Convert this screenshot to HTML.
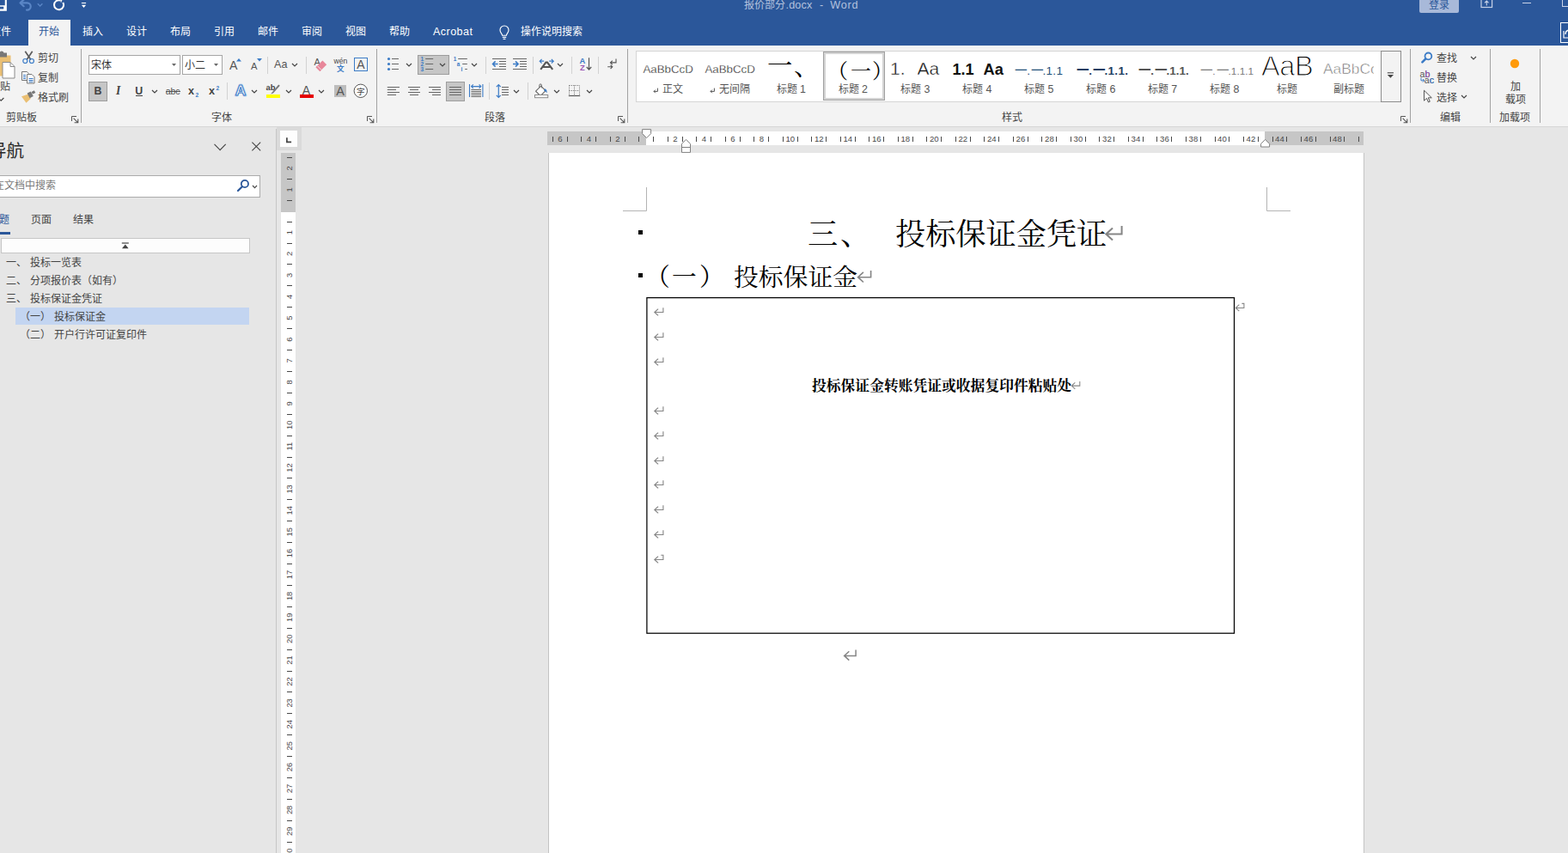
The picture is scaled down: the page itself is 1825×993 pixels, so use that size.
<!DOCTYPE html>
<html lang="zh-CN"><head><meta charset="utf-8"><title>报价部分.docx - Word</title>
<style>
html,body{margin:0;padding:0}
html{overflow:hidden;background:#e6e6e6}
body{width:1825px;height:993px;overflow:hidden;position:relative;background:#e6e6e6;font-family:"Liberation Sans",sans-serif;font-size:12px;color:#444}
.a{position:absolute;box-sizing:border-box;display:block;overflow:visible}
.l{white-space:pre}
svg{shape-rendering:auto}
.t{font-family:"Liberation Sans","Noto Sans CJK SC",sans-serif}
.s{font-family:"Liberation Serif","Noto Serif CJK SC",serif}
</style></head><body>
<div class="a" style="left:0px;top:0px;width:1825px;height:53px;background:#2b579a;"></div>
<div class="a" style="left:33px;top:23px;width:49px;height:31px;background:#f3f3f3;"></div>
<svg class="a" style="left:-6px;top:-4px;" width="15" height="18" viewBox="0 0 15 18"><path d="M0 3H12.8V15.6H0" fill="none" stroke="#fff" stroke-width="2.1"/><path d="M0 11H11.1V15" fill="none" stroke="#fff" stroke-width="1.7"/></svg>
<svg class="a" style="left:22px;top:-3px;" width="17" height="16" viewBox="0 0 17 16"><path d="M3 6.4h6.6a4.1 4.1 0 0 1 0 8.2H9" fill="none" stroke="#5a86c6" stroke-width="2.2" stroke-linecap="round"/><path d="M5.6 2.6L1.6 6.4l4 3.8" fill="none" stroke="#5a86c6" stroke-width="2.2" stroke-linecap="round" stroke-linejoin="round"/></svg>
<svg class="a" style="left:43px;top:3px;" width="8" height="6" viewBox="0 0 8 6"><path d="M0.8 1.2l2.8 2.8 2.8-2.8" fill="none" stroke="#5a86c6" stroke-width="1.3"/></svg>
<svg class="a" style="left:61px;top:-4px;" width="16" height="17" viewBox="0 0 16 17"><path d="M9.6 4.6A5.5 5.5 0 1 1 5.6 4.6" fill="none" stroke="#fff" stroke-width="2" transform="rotate(38 7.6 9.6)"/><path d="M8.2 0.4l5.6 3.2-2.6 0.6-1.2 3.4z" fill="#fff"/></svg>
<svg class="a" style="left:93px;top:2px;" width="10" height="8" viewBox="0 0 10 8"><path d="M1.9 1.5h5.2" stroke="#fff" stroke-width="1.1"/><path d="M1.9 3.7h5.2l-2.6 3.3z" fill="#fff"/></svg>
<svg class="a" style="left:866px;top:-2.4px" width="48.0" height="15.6"><text class="t" x="0" y="12" font-size="12" fill="#b4c2de">报价部分</text></svg>
<span class="a l" style="left:914.5px;top:-1px;font-size:12.6px;line-height:14px;color:#b4c2de;letter-spacing:0.15px;">.docx</span>
<span class="a l" style="left:954px;top:-1px;font-size:12.6px;line-height:14px;color:#b4c2de;">-</span>
<span class="a l" style="left:966.3px;top:-1px;font-size:12.6px;line-height:14px;color:#b4c2de;letter-spacing:0.75px;">Word</span>
<div class="a" style="left:1652px;top:0px;width:46px;height:15px;background:#a8b9d9;border-radius:0 0 2px 2px;"></div>
<svg class="a" style="left:1663px;top:-2.2px" width="24.0" height="15.6"><text class="t" x="0" y="12" font-size="12" fill="#2b579a">登录</text></svg>
<svg class="a" style="left:1723px;top:-5px;" width="15" height="15" viewBox="0 0 15 15"><rect x="1" y="0.5" width="12.6" height="13" fill="none" stroke="#c5d0e6" stroke-width="1.2"/><path d="M1 4.2h12.6M7.3 11.5v-5M5 8.3l2.3-2.3 2.3 2.3" fill="none" stroke="#c5d0e6" stroke-width="1.1"/></svg>
<div class="a" style="left:1772px;top:3px;width:10px;height:1px;background:#c9d3e8;"></div>
<div class="a" style="left:1818px;top:-3px;width:12px;height:11px;border:1px solid #c9d3e8;"></div>
<div class="a" style="left:1816px;top:26px;width:14px;height:24px;border:1px solid #fff;"></div>
<svg class="a" style="left:1819px;top:33px;" width="8" height="12" viewBox="0 0 8 12"><path d="M1 3v8h8M3 7c0-3 2-5 5-5" fill="none" stroke="#fff" stroke-width="1.2"/></svg>
<svg class="a" style="left:-10.8px;top:29.3px" width="24.0" height="15.6"><text class="t" x="0" y="12" font-size="12" fill="#fff">文件</text></svg>
<svg class="a" style="left:44.5px;top:29.3px" width="24.0" height="15.6"><text class="t" x="0" y="12" font-size="12" fill="#2b579a">开始</text></svg>
<svg class="a" style="left:95.8px;top:29.3px" width="24.0" height="15.6"><text class="t" x="0" y="12" font-size="12" fill="#fff">插入</text></svg>
<svg class="a" style="left:146.8px;top:29.3px" width="24.0" height="15.6"><text class="t" x="0" y="12" font-size="12" fill="#fff">设计</text></svg>
<svg class="a" style="left:197.8px;top:29.3px" width="24.0" height="15.6"><text class="t" x="0" y="12" font-size="12" fill="#fff">布局</text></svg>
<svg class="a" style="left:248.8px;top:29.3px" width="24.0" height="15.6"><text class="t" x="0" y="12" font-size="12" fill="#fff">引用</text></svg>
<svg class="a" style="left:299.8px;top:29.3px" width="24.0" height="15.6"><text class="t" x="0" y="12" font-size="12" fill="#fff">邮件</text></svg>
<svg class="a" style="left:350.8px;top:29.3px" width="24.0" height="15.6"><text class="t" x="0" y="12" font-size="12" fill="#fff">审阅</text></svg>
<svg class="a" style="left:401.8px;top:29.3px" width="24.0" height="15.6"><text class="t" x="0" y="12" font-size="12" fill="#fff">视图</text></svg>
<svg class="a" style="left:452.8px;top:29.3px" width="24.0" height="15.6"><text class="t" x="0" y="12" font-size="12" fill="#fff">帮助</text></svg>
<span class="a l" style="left:504px;top:30px;font-size:12.6px;line-height:14px;color:#fff;letter-spacing:0.42px;">Acrobat</span>
<svg class="a" style="left:579px;top:29px;" width="16" height="18" viewBox="0 0 16 18"><path d="M5.6 12.2c0-2-2.6-3-2.6-6.2a5 5 0 0 1 10 0c0 3.2-2.6 4.2-2.6 6.2z" fill="none" stroke="#fff" stroke-width="1.15"/><path d="M5.8 14.3h4.4M6.6 16.3h2.8" stroke="#fff" stroke-width="1.15"/></svg>
<svg class="a" style="left:606px;top:29.3px" width="72.0" height="15.6"><text class="t" x="0" y="12" font-size="12" fill="#fff">操作说明搜索</text></svg>
<div class="a" style="left:0px;top:53px;width:1825px;height:94px;background:#f3f3f3;"></div>
<div class="a" style="left:0px;top:147px;width:1825px;height:1px;background:#d6d6d6;"></div>
<svg class="a" style="left:-12px;top:58px;" width="30" height="34" viewBox="0 0 30 34"><path d="M2 6.5h22.5v24H2z" fill="#eabf73"/><path d="M7 3.5h4.5a2.6 2.6 0 0 1 5 0H20v5H7z" fill="#777"/><path d="M15 14.5h9l5 5V33H15z" fill="#fff" stroke="#8a8a8a" stroke-width="1"/><path d="M24 14.5v5h5" fill="none" stroke="#8a8a8a" stroke-width="1"/></svg>
<svg class="a" style="left:-11.7px;top:92.8px" width="24.0" height="15.6"><text class="t" x="0" y="12" font-size="12" fill="#444">粘贴</text></svg>
<svg class="a" style="left:-3.5px;top:113px;" width="8.4" height="5.4" viewBox="0 0 8.4 5.4"><path d="M1 1l3.2 3.2 3.2 -3.2" fill="none" stroke="#444" stroke-width="1.2"/></svg>
<svg class="a" style="left:25px;top:59px;" width="17" height="16" viewBox="0 0 17 16"><path d="M4.3 0.8l6.6 9.6M12.7 0.8L6.1 10.4" stroke="#5c5c5c" stroke-width="1.7" fill="none"/><circle cx="4.3" cy="12" r="2.5" fill="none" stroke="#3b7bc6" stroke-width="1.2"/><circle cx="11.9" cy="12" r="2.5" fill="none" stroke="#3b7bc6" stroke-width="1.2"/></svg>
<svg class="a" style="left:44.2px;top:60.3px" width="24.0" height="15.6"><text class="t" x="0" y="12" font-size="12" fill="#444">剪切</text></svg>
<svg class="a" style="left:24px;top:82px;" width="18" height="16" viewBox="0 0 18 16"><path d="M1.5 1.5h5.8l2.2 2.2v7.8h-8z" fill="#fff" stroke="#777" stroke-width="1"/><path d="M7.5 4.5h5.5l3 3v7.5h-8.5z" fill="#fff" stroke="#777" stroke-width="1"/><path d="M3 5.5h3M3 7.5h3M3 9.5h3M9.5 9.5h5M9.5 11.5h5M9.5 13.2h5" stroke="#3b7bc6" stroke-width="1"/></svg>
<svg class="a" style="left:44.2px;top:83.2px" width="24.0" height="15.6"><text class="t" x="0" y="12" font-size="12" fill="#444">复制</text></svg>
<svg class="a" style="left:24px;top:105px;" width="18" height="16" viewBox="0 0 18 16"><path d="M1 7.2l8.2-2.6 2.6 5.2-5.3 5z" fill="#eabf73"/><path d="M7.6 3.6l4.2-2.2 3 5.6-4.2 2.2z" fill="#777"/><path d="M12.6 1.9l3.2-1.7 1.5 2.7-3.3 1.7z" fill="#777"/></svg>
<svg class="a" style="left:44px;top:106.2px" width="36.0" height="15.6"><text class="t" x="0" y="12" font-size="12" fill="#444">格式刷</text></svg>
<svg class="a" style="left:7.2px;top:128.7px" width="36.0" height="15.6"><text class="t" x="0" y="12" font-size="12" fill="#444">剪贴板</text></svg>
<svg class="a" style="left:82.5px;top:134.5px;" width="9" height="9" viewBox="0 0 9 9"><path d="M0.5 6V0.5H6" fill="none" stroke="#555" stroke-width="1"/><path d="M2.6 2.6L7.6 7.6M7.8 3.6V7.8H3.6" fill="none" stroke="#555" stroke-width="1.1"/></svg>
<div class="a" style="left:94px;top:57px;width:1px;height:86px;background:#a2a2a2;"></div>
<div class="a" style="left:103px;top:64px;width:107px;height:23px;background:#fff;border:1px solid #a6a6a6;"></div>
<div class="a" style="left:212px;top:64px;width:47px;height:23px;background:#fff;border:1px solid #a6a6a6;"></div>
<svg class="a" style="left:105.8px;top:68px" width="24.0" height="15.6"><text class="t" x="0" y="12" font-size="12" fill="#333">宋体</text></svg>
<svg class="a" style="left:200px;top:74px;" width="5" height="3" viewBox="0 0 5 3"><path d="M0 0h5l-2.5 3z" fill="#666"/></svg>
<svg class="a" style="left:214.8px;top:68px" width="24.0" height="15.6"><text class="t" x="0" y="12" font-size="12" fill="#333">小二</text></svg>
<svg class="a" style="left:249px;top:74px;" width="5" height="3" viewBox="0 0 5 3"><path d="M0 0h5l-2.5 3z" fill="#666"/></svg>
<span class="a l" style="left:267px;top:68px;font-size:14.2px;line-height:16px;color:#555;">A</span>
<svg class="a" style="left:274.5px;top:67.5px;" width="6" height="4" viewBox="0 0 6 4"><path d="M0 3.5L3 0l3 3.5z" fill="#3b7bc6"/></svg>
<span class="a l" style="left:292px;top:71px;font-size:11.2px;line-height:12px;color:#555;">A</span>
<svg class="a" style="left:298.5px;top:67.5px;" width="6" height="4" viewBox="0 0 6 4"><path d="M0 0h6L3 3.5z" fill="#3b7bc6"/></svg>
<div class="a" style="left:311px;top:65.5px;width:1px;height:20px;background:#d2d2d2;"></div>
<span class="a l" style="left:319px;top:68px;font-size:12.6px;line-height:14px;color:#555;">Aa</span>
<svg class="a" style="left:338.7px;top:72.8px;" width="8" height="5.1" viewBox="0 0 8 5.1"><path d="M1 1l3 2.9 3 -2.9" fill="none" stroke="#444" stroke-width="1.2"/></svg>
<div class="a" style="left:356px;top:65.5px;width:1px;height:20px;background:#d2d2d2;"></div>
<span class="a l" style="left:365.5px;top:66px;font-size:11px;line-height:12px;color:#555;">A</span>
<svg class="a" style="left:366px;top:69px;" width="16" height="15" viewBox="0 0 16 15"><path d="M1.6 9.3L9.4 1.5l4.8 4.8-7.8 7.8z" fill="#e8879a"/><path d="M1.6 9.3l1.7-1.7 4.8 4.8-1.7 1.7z" fill="#e8879a" stroke="#f3f3f3" stroke-width="0.0"/><path d="M3.3 7.6l4.8 4.8" stroke="#f3f3f3" stroke-width="0.9"/></svg>
<span class="a l" style="left:388.4px;top:66px;font-size:8.6px;line-height:10px;color:#444;letter-spacing:0.1px;">wén</span>
<svg class="a" style="left:392.3px;top:73.7px" width="8.6" height="11.2"><text class="t" x="0" y="8.6" font-size="8.6" font-weight="bold" fill="#3b7bc6">文</text></svg>
<div class="a" style="left:412px;top:67px;width:16px;height:16px;border:1px solid #3b7bc6;"></div>
<span class="a l" style="left:415.2px;top:67px;font-size:14px;line-height:16px;color:#555;">A</span>
<div class="a" style="left:103px;top:95px;width:22px;height:23px;background:#c6c6c6;border:1px solid #9d9d9d;"></div>
<span class="a l" style="left:109.4px;top:99px;font-size:12.4px;line-height:14px;color:#444;font-weight:bold;">B</span>
<span class="a l" style="left:135px;top:98px;font-size:13.6px;line-height:15px;color:#444;font-family:'Liberation Serif',serif;font-weight:bold;font-style:italic;">I</span>
<span class="a l" style="left:157.2px;top:99px;font-size:12.4px;line-height:14px;color:#444;font-weight:bold;">U</span>
<div class="a" style="left:157.5px;top:111px;width:8.5px;height:1px;background:#444;"></div>
<svg class="a" style="left:175.7px;top:103.8px;" width="8" height="5.1" viewBox="0 0 8 5.1"><path d="M1 1l3 2.9 3 -2.9" fill="none" stroke="#444" stroke-width="1.2"/></svg>
<span class="a l" style="left:192.8px;top:100px;font-size:10.6px;line-height:12px;color:#555;letter-spacing:-0.2px;">abc</span>
<div class="a" style="left:192.5px;top:106px;width:17px;height:1px;background:#555;"></div>
<span class="a l" style="left:219px;top:99px;font-size:12.6px;line-height:14px;color:#444;font-weight:bold;">x</span>
<span class="a l" style="left:227.6px;top:107px;font-size:6.6px;line-height:7px;color:#3b7bc6;font-weight:bold;">2</span>
<span class="a l" style="left:243px;top:99px;font-size:12.6px;line-height:14px;color:#444;font-weight:bold;">x</span>
<span class="a l" style="left:251.6px;top:99px;font-size:6.6px;line-height:7px;color:#3b7bc6;font-weight:bold;">2</span>
<div class="a" style="left:264px;top:96px;width:1px;height:20px;background:#d2d2d2;"></div>
<svg class="a" style="left:270px;top:96px;" width="20" height="19" viewBox="0 0 20 19"><text x="10" y="15.2" text-anchor="middle" font-family="Liberation Sans,sans-serif" font-size="17.4" fill="#fff" stroke="#c3d6f0" stroke-width="3" stroke-linejoin="round">A</text><text x="10" y="15.2" text-anchor="middle" font-family="Liberation Sans,sans-serif" font-size="17.4" font-weight="bold" fill="#fff" stroke="#3b7bc6" stroke-width="1.05" stroke-linejoin="round">A</text></svg>
<svg class="a" style="left:291.5px;top:103.8px;" width="8" height="5.1" viewBox="0 0 8 5.1"><path d="M1 1l3 2.9 3 -2.9" fill="none" stroke="#444" stroke-width="1.2"/></svg>
<span class="a l" style="left:309.6px;top:96px;font-size:9.4px;line-height:11px;color:#444;font-weight:bold;">ab</span>
<svg class="a" style="left:313px;top:98px;" width="14" height="12" viewBox="0 0 14 12"><path d="M11.2 0.6l1.6 1.2L5 10.4l-3 1z" fill="#777"/></svg>
<div class="a" style="left:310px;top:110px;width:16px;height:4px;background:#ffff00;"></div>
<svg class="a" style="left:331.5px;top:103.8px;" width="8" height="5.1" viewBox="0 0 8 5.1"><path d="M1 1l3 2.9 3 -2.9" fill="none" stroke="#444" stroke-width="1.2"/></svg>
<span class="a l" style="left:351.8px;top:97px;font-size:14px;line-height:16px;color:#555;">A</span>
<div class="a" style="left:349px;top:110px;width:16px;height:4px;background:#e60000;"></div>
<svg class="a" style="left:370.4px;top:103.8px;" width="8" height="5.1" viewBox="0 0 8 5.1"><path d="M1 1l3 2.9 3 -2.9" fill="none" stroke="#444" stroke-width="1.2"/></svg>
<div class="a" style="left:389px;top:99px;width:14px;height:14px;background:#bdbdbd;"></div>
<span class="a l" style="left:391.2px;top:98px;font-size:14.4px;line-height:16px;color:#555;">A</span>
<svg class="a" style="left:411px;top:97px;" width="18" height="18" viewBox="0 0 18 18"><circle cx="8.8" cy="8.8" r="7.7" fill="#fff" stroke="#555" stroke-width="1"/></svg>
<svg class="a" style="left:415px;top:99.6px" width="9.6" height="12.5"><text class="t" x="0" y="9.6" font-size="9.6" fill="#444">字</text></svg>
<svg class="a" style="left:246px;top:128.7px" width="24.0" height="15.6"><text class="t" x="0" y="12" font-size="12" fill="#444">字体</text></svg>
<svg class="a" style="left:426.5px;top:134.5px;" width="9" height="9" viewBox="0 0 9 9"><path d="M0.5 6V0.5H6" fill="none" stroke="#555" stroke-width="1"/><path d="M2.6 2.6L7.6 7.6M7.8 3.6V7.8H3.6" fill="none" stroke="#555" stroke-width="1.1"/></svg>
<div class="a" style="left:438px;top:57px;width:1px;height:86px;background:#a2a2a2;"></div>
<svg class="a" style="left:450px;top:66px;" width="16" height="17" viewBox="0 0 16 17"><circle cx="2.5" cy="2.5" r="1.6" fill="#3b7bc6"/><path d="M6 2.5H14" stroke="#666" stroke-width="1"/><circle cx="2.5" cy="8.5" r="1.6" fill="#3b7bc6"/><path d="M6 8.5H14" stroke="#666" stroke-width="1"/><circle cx="2.5" cy="14.5" r="1.6" fill="#3b7bc6"/><path d="M6 14.5H14" stroke="#666" stroke-width="1"/></svg>
<svg class="a" style="left:471.5px;top:72.8px;" width="8" height="5.1" viewBox="0 0 8 5.1"><path d="M1 1l3 2.9 3 -2.9" fill="none" stroke="#444" stroke-width="1.2"/></svg>
<div class="a" style="left:486px;top:64px;width:37px;height:23px;background:#c6c6c6;border:1px solid #9d9d9d;"></div>
<span class="a l" style="left:489.6px;top:65px;font-size:6.6px;line-height:7px;color:#3b7bc6;font-weight:bold;">1</span>
<span class="a l" style="left:489.6px;top:71px;font-size:6.6px;line-height:7px;color:#3b7bc6;font-weight:bold;">2</span>
<span class="a l" style="left:489.6px;top:77px;font-size:6.6px;line-height:7px;color:#3b7bc6;font-weight:bold;">3</span>
<svg class="a" style="left:494px;top:66px;" width="12" height="17" viewBox="0 0 12 17"><path d="M1.2 2.5H10.2" stroke="#666" stroke-width="1"/><path d="M1.2 8.5H10.2" stroke="#666" stroke-width="1"/><path d="M1.2 14.5H10.2" stroke="#666" stroke-width="1"/></svg>
<svg class="a" style="left:510.5px;top:72.8px;" width="8" height="5.1" viewBox="0 0 8 5.1"><path d="M1 1l3 2.9 3 -2.9" fill="none" stroke="#444" stroke-width="1.2"/></svg>
<span class="a l" style="left:527.8px;top:65px;font-size:6.4px;line-height:7px;color:#3b7bc6;font-weight:bold;">1</span>
<span class="a l" style="left:531.8px;top:71px;font-size:6.4px;line-height:7px;color:#3b7bc6;font-weight:bold;">a</span>
<span class="a l" style="left:536.6px;top:77px;font-size:6.4px;line-height:7px;color:#3b7bc6;font-weight:bold;">i</span>
<svg class="a" style="left:530px;top:66px;" width="16" height="17" viewBox="0 0 16 17"><path d="M3.2 2.5H13.8" stroke="#666" stroke-width="1"/><path d="M8.2 8.5H13.8" stroke="#666" stroke-width="1"/><path d="M11.2 14.5H13.8" stroke="#666" stroke-width="1"/></svg>
<svg class="a" style="left:547.5px;top:72.8px;" width="8" height="5.1" viewBox="0 0 8 5.1"><path d="M1 1l3 2.9 3 -2.9" fill="none" stroke="#444" stroke-width="1.2"/></svg>
<div class="a" style="left:565px;top:65.5px;width:1px;height:20px;background:#d2d2d2;"></div>
<svg class="a" style="left:572px;top:66px;" width="19" height="17" viewBox="0 0 19 17"><path d="M1 2.5H17" stroke="#666" stroke-width="1"/><path d="M1 14.5H17" stroke="#666" stroke-width="1"/><path d="M9 5.5H17" stroke="#666" stroke-width="1"/><path d="M9 8.5H17" stroke="#666" stroke-width="1"/><path d="M9 11.5H17" stroke="#666" stroke-width="1"/><path d="M1.4 8.5h6.2M4.6 5.4L1.5 8.5l3.1 3.1" fill="none" stroke="#3b7bc6" stroke-width="1.5"/></svg>
<svg class="a" style="left:596px;top:66px;" width="19" height="17" viewBox="0 0 19 17"><path d="M1 2.5H17" stroke="#666" stroke-width="1"/><path d="M1 14.5H17" stroke="#666" stroke-width="1"/><path d="M9 5.5H17" stroke="#666" stroke-width="1"/><path d="M9 8.5H17" stroke="#666" stroke-width="1"/><path d="M9 11.5H17" stroke="#666" stroke-width="1"/><path d="M1 8.5h6.2M4 5.4l3.1 3.1L4 11.6" fill="none" stroke="#3b7bc6" stroke-width="1.5"/></svg>
<div class="a" style="left:620px;top:65.5px;width:1px;height:20px;background:#d2d2d2;"></div>
<svg class="a" style="left:626px;top:66px;" width="20" height="17" viewBox="0 0 20 17"><path d="M3.2 14.8L9.4 6.6h1.6l6.2 8.2M5.8 12h8.8" fill="none" stroke="#555" stroke-width="2.1"/><path d="M2.2 5.2h5M4.6 2.8L2.2 5.2l2.4 2.4M18.2 5.2h-5M15.8 2.8l2.4 2.4-2.4 2.4" fill="none" stroke="#3b7bc6" stroke-width="1.2"/></svg>
<svg class="a" style="left:647.6px;top:72.8px;" width="8" height="5.1" viewBox="0 0 8 5.1"><path d="M1 1l3 2.9 3 -2.9" fill="none" stroke="#444" stroke-width="1.2"/></svg>
<div class="a" style="left:665px;top:65.5px;width:1px;height:20px;background:#d2d2d2;"></div>
<span class="a l" style="left:674.6px;top:65px;font-size:9.4px;line-height:11px;color:#3b7bc6;font-weight:bold;">A</span>
<span class="a l" style="left:675px;top:73px;font-size:9.4px;line-height:11px;color:#9b59b6;font-weight:bold;">Z</span>
<svg class="a" style="left:682px;top:66px;" width="8" height="17" viewBox="0 0 8 17"><path d="M3.5 1.2v14M0.8 12l2.7 3 2.7-3" fill="none" stroke="#555" stroke-width="1.2"/></svg>
<div class="a" style="left:696px;top:65.5px;width:1px;height:20px;background:#d2d2d2;"></div>
<svg class="a" style="left:706px;top:67px;" width="13" height="15" viewBox="0 0 13 15"><path d="M11 1.5v4.4H4.6M6.8 3.6L4.4 5.9l2.4 2.3" fill="none" stroke="#555" stroke-width="1.1"/><path d="M1.2 10.8h5.4M4.6 8.6l2.2 2.2-2.2 2.2" fill="none" stroke="#555" stroke-width="1.1"/></svg>
<svg class="a" style="left:450px;top:100px;" width="16" height="12" viewBox="0 0 16 12"><path d="M0.8 1.5H15" stroke="#666" stroke-width="1"/><path d="M0.8 4.5H11" stroke="#666" stroke-width="1"/><path d="M0.8 7.5H15" stroke="#666" stroke-width="1"/><path d="M0.8 10.5H11" stroke="#666" stroke-width="1"/></svg>
<svg class="a" style="left:474px;top:100px;" width="16" height="12" viewBox="0 0 16 12"><path d="M1 1.5H15" stroke="#666" stroke-width="1"/><path d="M3 4.5H13" stroke="#666" stroke-width="1"/><path d="M1 7.5H15" stroke="#666" stroke-width="1"/><path d="M3 10.5H13" stroke="#666" stroke-width="1"/></svg>
<svg class="a" style="left:498px;top:100px;" width="16" height="12" viewBox="0 0 16 12"><path d="M1 1.5H15" stroke="#666" stroke-width="1"/><path d="M5 4.5H15" stroke="#666" stroke-width="1"/><path d="M1 7.5H15" stroke="#666" stroke-width="1"/><path d="M5 10.5H15" stroke="#666" stroke-width="1"/></svg>
<div class="a" style="left:519px;top:95px;width:22px;height:23px;background:#c6c6c6;border:1px solid #9d9d9d;"></div>
<svg class="a" style="left:522px;top:100px;" width="16" height="12" viewBox="0 0 16 12"><path d="M1 1.5H15" stroke="#666" stroke-width="1"/><path d="M1 4.5H15" stroke="#666" stroke-width="1"/><path d="M1 7.5H15" stroke="#666" stroke-width="1"/><path d="M1 10.5H15" stroke="#666" stroke-width="1"/></svg>
<svg class="a" style="left:545px;top:97px;" width="18" height="17" viewBox="0 0 18 17"><path d="M1.5 1v15M16.9 1v15" stroke="#3b7bc6" stroke-width="1.1"/><path d="M3.6 3.6h11.2M5.8 1.4L3.6 3.6l2.2 2.2M12.6 1.4l2.2 2.2-2.2 2.2" fill="none" stroke="#3b7bc6" stroke-width="1.1"/><path d="M3.4 7.5H15" stroke="#666" stroke-width="1"/><path d="M3.4 9.5H15" stroke="#666" stroke-width="1"/><path d="M3.4 11.5H15" stroke="#666" stroke-width="1"/><path d="M3.4 13.5H15" stroke="#666" stroke-width="1"/><path d="M3.4 15.5H15" stroke="#666" stroke-width="1"/></svg>
<div class="a" style="left:569px;top:96px;width:1px;height:20px;background:#d2d2d2;"></div>
<svg class="a" style="left:576px;top:97px;" width="17" height="18" viewBox="0 0 17 18"><path d="M4.3 1.6v14.8M1.8 4.2l2.5-2.6 2.5 2.6M1.8 13.8l2.5 2.6 2.5-2.6" fill="none" stroke="#3b7bc6" stroke-width="1.2"/><path d="M8 4.5H16" stroke="#666" stroke-width="1"/><path d="M8 7.5H16" stroke="#666" stroke-width="1"/><path d="M8 10.5H16" stroke="#666" stroke-width="1"/><path d="M8 13.5H16" stroke="#666" stroke-width="1"/></svg>
<svg class="a" style="left:596.6px;top:103.8px;" width="8" height="5.1" viewBox="0 0 8 5.1"><path d="M1 1l3 2.9 3 -2.9" fill="none" stroke="#444" stroke-width="1.2"/></svg>
<div class="a" style="left:614px;top:96px;width:1px;height:20px;background:#d2d2d2;"></div>
<svg class="a" style="left:621px;top:97px;" width="18" height="18" viewBox="0 0 18 18"><path d="M2.6 9.2l6-6 5.4 5.4-6 6z" fill="#fff" stroke="#666" stroke-width="1.1"/><path d="M6.8 4.8V2.2a1.3 1.3 0 0 1 2.6 0v3.2" fill="none" stroke="#666" stroke-width="1"/><path d="M13.2 6.2c1.8 0.6 2.8 2.4 2.2 5.2-1-1.8-1.8-2.4-3.4-2.6z" fill="#3b7bc6"/><rect x="1.5" y="13.5" width="15.2" height="3.2" fill="#fff" stroke="#8a8a8a" stroke-width="1"/></svg>
<svg class="a" style="left:643.6px;top:103.8px;" width="8" height="5.1" viewBox="0 0 8 5.1"><path d="M1 1l3 2.9 3 -2.9" fill="none" stroke="#444" stroke-width="1.2"/></svg>
<svg class="a" style="left:661px;top:98px;" width="15" height="15" viewBox="0 0 15 15"><path d="M1.5 1.5h12M1.5 7.5h12M1.5 1.5v12M7.5 1.5v12M13.5 1.5v12" fill="none" stroke="#666" stroke-width="1" stroke-dasharray="1 1.4"/><path d="M0.8 13.5h13.4" stroke="#555" stroke-width="1.2"/></svg>
<svg class="a" style="left:682.3px;top:103.8px;" width="8" height="5.1" viewBox="0 0 8 5.1"><path d="M1 1l3 2.9 3 -2.9" fill="none" stroke="#444" stroke-width="1.2"/></svg>
<svg class="a" style="left:563.6px;top:128.7px" width="24.0" height="15.6"><text class="t" x="0" y="12" font-size="12" fill="#444">段落</text></svg>
<svg class="a" style="left:718.5px;top:134.5px;" width="9" height="9" viewBox="0 0 9 9"><path d="M0.5 6V0.5H6" fill="none" stroke="#555" stroke-width="1"/><path d="M2.6 2.6L7.6 7.6M7.8 3.6V7.8H3.6" fill="none" stroke="#555" stroke-width="1.1"/></svg>
<div class="a" style="left:730px;top:57px;width:1px;height:86px;background:#a2a2a2;"></div>
<div class="a" style="left:740px;top:59px;width:868px;height:60px;background:#fff;border:1px solid #d5d5d5;"></div>
<div class="a" style="left:748.4px;top:66px;width:59px;height:24px;overflow:hidden"><span class="a l" style="left:0;top:7px;font-size:13.3px;line-height:15px;color:#111;-webkit-text-stroke:0.3px #fff;">AaBbCcDd</span></div>
<svg class="a" style="left:760px;top:101.6px;" width="7" height="7" viewBox="0 0 7 7"><path d="M5.4 0.6V4.4H1M2.8 2.6L1 4.4l1.8 1.8" fill="none" stroke="#555" stroke-width="1"/></svg>
<svg class="a" style="left:770.8px;top:96.1px" width="24.0" height="15.6"><text class="t" x="0" y="12" font-size="12" fill="#555">正文</text></svg>
<div class="a" style="left:820.4px;top:66px;width:59px;height:24px;overflow:hidden"><span class="a l" style="left:0;top:7px;font-size:13.3px;line-height:15px;color:#111;-webkit-text-stroke:0.3px #fff;">AaBbCcDd</span></div>
<svg class="a" style="left:826.4px;top:101.6px;" width="7" height="7" viewBox="0 0 7 7"><path d="M5.4 0.6V4.4H1M2.8 2.6L1 4.4l1.8 1.8" fill="none" stroke="#555" stroke-width="1"/></svg>
<svg class="a" style="left:836.5px;top:96.1px" width="36.0" height="15.6"><text class="t" x="0" y="12" font-size="12" fill="#555">无间隔</text></svg>
<svg class="a" style="left:892.6px;top:58.3px" width="29.3" height="38.1"><text class="s" x="0" y="29.3" font-size="29.3" fill="#000">一</text></svg>
<svg class="a" style="left:924.2px;top:58.3px" width="29.3" height="38.1"><text class="s" x="0" y="29.3" font-size="29.3" fill="#000">、</text></svg>
<svg class="a" style="left:903.6px;top:96.1px" width="24.0" height="15.6"><text class="t" x="0" y="12" font-size="12" fill="#555">标题</text></svg>
<span class="a l" style="left:931px;top:97px;font-size:12.4px;line-height:14px;color:#555;">1</span>
<div class="a" style="left:958px;top:60px;width:72px;height:57px;background:#fff;border:1px solid #a0a0a0;box-shadow:inset 0 0 0 2px #d4d4d4;"></div>
<div class="a" style="left:961px;top:63px;width:63px;height:34px;overflow:hidden">
<svg class="a" style="left:2px;top:3.6px" width="24.0" height="31.2"><text class="s" x="0" y="24" font-size="24" fill="#000">（</text></svg>
<svg class="a" style="left:28.6px;top:3.6px" width="24.0" height="31.2"><text class="s" x="0" y="24" font-size="24" fill="#000">一</text></svg>
<svg class="a" style="left:54.4px;top:3.6px" width="24.0" height="31.2"><text class="s" x="0" y="24" font-size="24" fill="#000">）</text></svg>
</div>
<svg class="a" style="left:975.6px;top:96.1px" width="24.0" height="15.6"><text class="t" x="0" y="12" font-size="12" fill="#555">标题</text></svg>
<span class="a l" style="left:1003px;top:97px;font-size:12.4px;line-height:14px;color:#555;">2</span>
<div class="a" style="left:1036px;top:62px;width:20px;height:28px;overflow:hidden"><span class="a l" style="left:0;top:6px;font-size:21px;line-height:23px;color:#111;-webkit-text-stroke:0.4px #fff;">1.</span></div>
<div class="a" style="left:1067.6px;top:62px;width:26.6px;height:28px;overflow:hidden"><span class="a l" style="left:0;top:6px;font-size:21px;line-height:23px;color:#111;-webkit-text-stroke:0.4px #fff;">Aab</span></div>
<svg class="a" style="left:1048px;top:96.1px" width="24.0" height="15.6"><text class="t" x="0" y="12" font-size="12" fill="#555">标题</text></svg>
<span class="a l" style="left:1075.4px;top:97px;font-size:12.4px;line-height:14px;color:#555;">3</span>
<div class="a" style="left:1108.4px;top:62px;width:30px;height:28px;overflow:hidden"><span class="a l" style="left:0;top:9px;font-size:18.2px;line-height:20px;color:#111;font-weight:bold;">1.1</span></div>
<div class="a" style="left:1144.6px;top:62px;width:26px;height:28px;overflow:hidden"><span class="a l" style="left:0;top:9px;font-size:18.2px;line-height:20px;color:#111;font-weight:bold;">Aa</span></div>
<svg class="a" style="left:1120px;top:96.1px" width="24.0" height="15.6"><text class="t" x="0" y="12" font-size="12" fill="#555">标题</text></svg>
<span class="a l" style="left:1147.4px;top:97px;font-size:12.4px;line-height:14px;color:#555;">4</span>
<svg class="a" style="left:1181px;top:72px" width="14.6" height="19.0"><text class="t" x="0" y="14.6" font-size="14.6" fill="#1f4e79">一</text></svg>
<span class="a l" style="left:1195.2px;top:75px;font-size:13.4px;line-height:15px;color:#1f4e79;">.</span>
<svg class="a" style="left:1199.6px;top:72px" width="14.6" height="19.0"><text class="t" x="0" y="14.6" font-size="14.6" fill="#1f4e79">一</text></svg>
<span class="a l" style="left:1213.6px;top:75px;font-size:13.4px;line-height:15px;color:#1f4e79;letter-spacing:0.3px;">.1.1</span>
<svg class="a" style="left:1192px;top:96.1px" width="24.0" height="15.6"><text class="t" x="0" y="12" font-size="12" fill="#555">标题</text></svg>
<span class="a l" style="left:1219.4px;top:97px;font-size:12.4px;line-height:14px;color:#555;">5</span>
<svg class="a" style="left:1253px;top:72px" width="14.6" height="19.0"><text class="t" x="0" y="14.6" font-size="14.6" font-weight="bold" fill="#1f3e63">一</text></svg>
<span class="a l" style="left:1267.2px;top:75px;font-size:13.4px;line-height:15px;color:#1f3e63;font-weight:bold;">.</span>
<svg class="a" style="left:1271.6px;top:72px" width="14.6" height="19.0"><text class="t" x="0" y="14.6" font-size="14.6" font-weight="bold" fill="#1f3e63">一</text></svg>
<span class="a l" style="left:1285.6px;top:75px;font-size:13.4px;line-height:15px;color:#1f3e63;font-weight:bold;letter-spacing:0.3px;">.1.1.</span>
<svg class="a" style="left:1264.2px;top:96.1px" width="24.0" height="15.6"><text class="t" x="0" y="12" font-size="12" fill="#555">标题</text></svg>
<span class="a l" style="left:1291.6px;top:97px;font-size:12.4px;line-height:14px;color:#555;">6</span>
<svg class="a" style="left:1325px;top:72px" width="14.6" height="19.0"><text class="t" x="0" y="14.6" font-size="14.6" font-weight="bold" fill="#555">一</text></svg>
<span class="a l" style="left:1339.2px;top:75px;font-size:13.4px;line-height:15px;color:#555;font-weight:bold;">.</span>
<svg class="a" style="left:1343.6px;top:72px" width="14.6" height="19.0"><text class="t" x="0" y="14.6" font-size="14.6" font-weight="bold" fill="#555">一</text></svg>
<span class="a l" style="left:1357.6px;top:75px;font-size:13.4px;line-height:15px;color:#555;font-weight:bold;">.1.1.</span>
<svg class="a" style="left:1335.8px;top:96.1px" width="24.0" height="15.6"><text class="t" x="0" y="12" font-size="12" fill="#555">标题</text></svg>
<span class="a l" style="left:1363.2px;top:97px;font-size:12.4px;line-height:14px;color:#555;">7</span>
<svg class="a" style="left:1397px;top:72px" width="14.6" height="19.0"><text class="t" x="0" y="14.6" font-size="14.6" fill="#7a7a7a">一</text></svg>
<span class="a l" style="left:1411.2px;top:76px;font-size:11.8px;line-height:14px;color:#7a7a7a;">.</span>
<svg class="a" style="left:1415.6px;top:72px" width="14.6" height="19.0"><text class="t" x="0" y="14.6" font-size="14.6" fill="#7a7a7a">一</text></svg>
<span class="a l" style="left:1429.6px;top:76px;font-size:11.8px;line-height:14px;color:#7a7a7a;">.1.1.1</span>
<svg class="a" style="left:1408px;top:96.1px" width="24.0" height="15.6"><text class="t" x="0" y="12" font-size="12" fill="#555">标题</text></svg>
<span class="a l" style="left:1435.4px;top:97px;font-size:12.4px;line-height:14px;color:#555;">8</span>
<div class="a" style="left:1468px;top:66px;width:62px;height:26px;overflow:hidden"><span class="a l" style="left:0;top:-8px;font-size:32.6px;line-height:37px;color:#000;letter-spacing:-0.4px;-webkit-text-stroke:1.25px #fff;">AaB</span></div>
<svg class="a" style="left:1486px;top:96.1px" width="24.0" height="15.6"><text class="t" x="0" y="12" font-size="12" fill="#555">标题</text></svg>
<div class="a" style="left:1540px;top:66px;width:59.4px;height:26px;overflow:hidden"><span class="a l" style="left:0;top:4px;font-size:17.4px;line-height:20px;color:#6f6f6f;-webkit-text-stroke:0.55px #fff;">AaBbCcD</span></div>
<svg class="a" style="left:1552px;top:96.1px" width="36.0" height="15.6"><text class="t" x="0" y="12" font-size="12" fill="#555">副标题</text></svg>
<div class="a" style="left:1607px;top:59px;width:24px;height:60px;background:#f3f3f3;border:1px solid #8c8c8c;"></div>
<svg class="a" style="left:1614px;top:84px;" width="9" height="8" viewBox="0 0 9 8"><path d="M0.8 0.8h7.2" stroke="#444" stroke-width="1.1"/><path d="M0.8 3h7.2L4.4 6.8z" fill="#444"/></svg>
<svg class="a" style="left:1166px;top:128.7px" width="24.0" height="15.6"><text class="t" x="0" y="12" font-size="12" fill="#444">样式</text></svg>
<svg class="a" style="left:1629.5px;top:134.5px;" width="9" height="9" viewBox="0 0 9 9"><path d="M0.5 6V0.5H6" fill="none" stroke="#555" stroke-width="1"/><path d="M2.6 2.6L7.6 7.6M7.8 3.6V7.8H3.6" fill="none" stroke="#555" stroke-width="1.1"/></svg>
<div class="a" style="left:1641px;top:57px;width:1px;height:86px;background:#a2a2a2;"></div>
<svg class="a" style="left:1653px;top:60px;" width="15" height="15" viewBox="0 0 15 15"><circle cx="9.4" cy="5.4" r="3.9" fill="none" stroke="#3b7bc6" stroke-width="1.8"/><path d="M6.4 8.4L2.4 12.4" stroke="#3b7bc6" stroke-width="2.6" stroke-linecap="round"/></svg>
<svg class="a" style="left:1672px;top:60.3px" width="24.0" height="15.6"><text class="t" x="0" y="12" font-size="12" fill="#444">查找</text></svg>
<svg class="a" style="left:1710.5px;top:64.5px;" width="8" height="5.1" viewBox="0 0 8 5.1"><path d="M1 1l3 2.9 3 -2.9" fill="none" stroke="#444" stroke-width="1.2"/></svg>
<span class="a l" style="left:1652.6px;top:80px;font-size:10.6px;line-height:12px;color:#555;">ab</span>
<span class="a l" style="left:1658.5px;top:80px;font-size:10.6px;line-height:12px;color:#9b59b6;">b</span>
<span class="a l" style="left:1657.8px;top:87px;font-size:10.6px;line-height:12px;color:#555;">ac</span>
<span class="a l" style="left:1663.7px;top:87px;font-size:10.6px;line-height:12px;color:#3b7bc6;">c</span>
<svg class="a" style="left:1653px;top:90px;" width="6" height="7" viewBox="0 0 6 7"><path d="M1 0.5v3.3h3.6M3 2l1.8 1.8L3 5.6" fill="none" stroke="#3b7bc6" stroke-width="1"/></svg>
<svg class="a" style="left:1672px;top:83.2px" width="24.0" height="15.6"><text class="t" x="0" y="12" font-size="12" fill="#444">替换</text></svg>
<svg class="a" style="left:1656px;top:104px;" width="12" height="17" viewBox="0 0 12 17"><path d="M1.5 1.2v12l3-2.8 2 4.6 1.8-0.8-2-4.4h4z" fill="#fff" stroke="#555" stroke-width="1" stroke-linejoin="round"/></svg>
<svg class="a" style="left:1672px;top:106.2px" width="24.0" height="15.6"><text class="t" x="0" y="12" font-size="12" fill="#444">选择</text></svg>
<svg class="a" style="left:1699.5px;top:110.4px;" width="8" height="5.1" viewBox="0 0 8 5.1"><path d="M1 1l3 2.9 3 -2.9" fill="none" stroke="#444" stroke-width="1.2"/></svg>
<svg class="a" style="left:1676px;top:128.7px" width="24.0" height="15.6"><text class="t" x="0" y="12" font-size="12" fill="#444">编辑</text></svg>
<div class="a" style="left:1734px;top:57px;width:1px;height:86px;background:#a2a2a2;"></div>
<svg class="a" style="left:1756px;top:67px;" width="14" height="14" viewBox="0 0 14 14"><circle cx="7" cy="7" r="5.2" fill="#ff9a0a"/></svg>
<svg class="a" style="left:1758px;top:93.3px" width="12.0" height="15.6"><text class="t" x="0" y="12" font-size="12" fill="#444">加</text></svg>
<svg class="a" style="left:1752px;top:108.2px" width="24.0" height="15.6"><text class="t" x="0" y="12" font-size="12" fill="#444">载项</text></svg>
<svg class="a" style="left:1745px;top:128.7px" width="36.0" height="15.6"><text class="t" x="0" y="12" font-size="12" fill="#444">加载项</text></svg>
<div class="a" style="left:1792px;top:57px;width:1px;height:86px;background:#a2a2a2;"></div>
<div class="a" style="left:321px;top:150px;width:1px;height:843px;background:#c6c6c6;"></div>
<svg class="a" style="left:-13.4px;top:161.8px" width="41.2" height="26.8"><text class="t" x="0" y="20.6" font-size="20.6" fill="#2b2b2b">导航</text></svg>
<svg class="a" style="left:248px;top:166px;" width="16" height="11" viewBox="0 0 16 11"><path d="M1.5 1.8l6.6 6.8 6.6-6.8" fill="none" stroke="#444" stroke-width="1.1"/></svg>
<svg class="a" style="left:292px;top:164px;" width="13" height="13" viewBox="0 0 13 13"><path d="M1.4 1.6l9.8 9.8M11.2 1.6l-9.8 9.8" fill="none" stroke="#444" stroke-width="1.1"/></svg>
<div class="a" style="left:-5px;top:204px;width:308px;height:26px;background:#fff;border:1px solid #ababab;"></div>
<svg class="a" style="left:-7.4px;top:207.6px" width="72.0" height="15.6"><text class="t" x="0" y="12" font-size="12" fill="#7a7a7a">在文档中搜索</text></svg>
<svg class="a" style="left:275px;top:208px;" width="17" height="16" viewBox="0 0 17 16"><circle cx="9.9" cy="6" r="4.1" fill="none" stroke="#2b579a" stroke-width="1.8"/><path d="M6.9 9.2L2 14" stroke="#2b579a" stroke-width="2.2" stroke-linecap="round"/></svg>
<svg class="a" style="left:293.4px;top:214.8px;" width="7" height="4.8" viewBox="0 0 7 4.8"><path d="M1 1l2.5 2.6 2.5 -2.6" fill="none" stroke="#444" stroke-width="1.1"/></svg>
<svg class="a" style="left:-12.8px;top:248.2px" width="24.0" height="15.6"><text class="t" x="0" y="12" font-size="12" fill="#2b579a">标题</text></svg>
<div class="a" style="left:0px;top:270px;width:12px;height:3px;background:#2b579a;"></div>
<svg class="a" style="left:35.6px;top:248.2px" width="24.0" height="15.6"><text class="t" x="0" y="12" font-size="12" fill="#444">页面</text></svg>
<svg class="a" style="left:85px;top:248.2px" width="24.0" height="15.6"><text class="t" x="0" y="12" font-size="12" fill="#444">结果</text></svg>
<div class="a" style="left:1px;top:277px;width:290px;height:18px;background:#fdfdfd;border:1px solid #c6c6c6;"></div>
<svg class="a" style="left:141px;top:282px;" width="10" height="8" viewBox="0 0 10 8"><path d="M0.8 1h8" stroke="#444" stroke-width="1.2"/><path d="M4.8 2.6L8.6 7.2H1z" fill="#444"/></svg>
<svg class="a" style="left:7px;top:297.5px" width="24.0" height="15.6"><text class="t" x="0" y="12" font-size="12" fill="#444">一、</text></svg>
<svg class="a" style="left:35px;top:297.5px" width="60.0" height="15.6"><text class="t" x="0" y="12" font-size="12" fill="#444">投标一览表</text></svg>
<svg class="a" style="left:7px;top:318.5px" width="24.0" height="15.6"><text class="t" x="0" y="12" font-size="12" fill="#444">二、</text></svg>
<svg class="a" style="left:35px;top:318.5px" width="104.6" height="15.6"><text class="t" x="0" y="12" font-size="12" fill="#444">分项报价表（如有）</text></svg>
<svg class="a" style="left:7px;top:339.5px" width="24.0" height="15.6"><text class="t" x="0" y="12" font-size="12" fill="#444">三、</text></svg>
<svg class="a" style="left:35px;top:339.5px" width="84.0" height="15.6"><text class="t" x="0" y="12" font-size="12" fill="#444">投标保证金凭证</text></svg>
<div class="a" style="left:18px;top:358px;width:272px;height:20px;background:#c3d5f1;"></div>
<svg class="a" style="left:23px;top:360.5px" width="36.0" height="15.6"><text class="t" x="0" y="12" font-size="12" fill="#444">（一）</text></svg>
<svg class="a" style="left:62.6px;top:360.5px" width="60.0" height="15.6"><text class="t" x="0" y="12" font-size="12" fill="#444">投标保证金</text></svg>
<svg class="a" style="left:23px;top:381.5px" width="36.0" height="15.6"><text class="t" x="0" y="12" font-size="12" fill="#444">（二）</text></svg>
<svg class="a" style="left:62.6px;top:381.5px" width="108.0" height="15.6"><text class="t" x="0" y="12" font-size="12" fill="#444">开户行许可证复印件</text></svg>
<div class="a" style="left:322px;top:148px;width:29px;height:27px;background:#dadada;"></div>
<div class="a" style="left:326px;top:152px;width:20px;height:19px;background:#fdfdfd;"></div>
<svg class="a" style="left:331px;top:157px;" width="10" height="10" viewBox="0 0 10 10"><path d="M2.9 3.2v5.2h5.2" fill="none" stroke="#444" stroke-width="1.7"/></svg>
<div class="a" style="left:327px;top:178px;width:17px;height:815px;background:#fff;"></div>
<div class="a" style="left:327px;top:178px;width:17px;height:69px;background:#c6c6c6;"></div>
<svg class="a" style="left:327px;top:0px;" width="17" height="993" viewBox="0 0 17 993"><path d="M7 183.5h6" stroke="#4a4a4a" stroke-width="1"/><path d="M7 208.5h6" stroke="#4a4a4a" stroke-width="1"/><text transform="translate(13.3 195.9) rotate(-90)" text-anchor="middle" font-family="Liberation Sans,sans-serif" font-size="9.4" fill="#4a4a4a">2</text><path d="M7 233.5h6" stroke="#4a4a4a" stroke-width="1"/><text transform="translate(13.3 220.8) rotate(-90)" text-anchor="middle" font-family="Liberation Sans,sans-serif" font-size="9.4" fill="#4a4a4a">1</text><path d="M7 258.5h6" stroke="#4a4a4a" stroke-width="1"/><path d="M7 283.5h6" stroke="#4a4a4a" stroke-width="1"/><text transform="translate(13.3 270.6) rotate(-90)" text-anchor="middle" font-family="Liberation Sans,sans-serif" font-size="9.4" fill="#4a4a4a">1</text><path d="M7 307.5h6" stroke="#4a4a4a" stroke-width="1"/><text transform="translate(13.3 295.5) rotate(-90)" text-anchor="middle" font-family="Liberation Sans,sans-serif" font-size="9.4" fill="#4a4a4a">2</text><path d="M7 332.5h6" stroke="#4a4a4a" stroke-width="1"/><text transform="translate(13.3 320.4) rotate(-90)" text-anchor="middle" font-family="Liberation Sans,sans-serif" font-size="9.4" fill="#4a4a4a">3</text><path d="M7 357.5h6" stroke="#4a4a4a" stroke-width="1"/><text transform="translate(13.3 345.3) rotate(-90)" text-anchor="middle" font-family="Liberation Sans,sans-serif" font-size="9.4" fill="#4a4a4a">4</text><path d="M7 382.5h6" stroke="#4a4a4a" stroke-width="1"/><text transform="translate(13.3 370.2) rotate(-90)" text-anchor="middle" font-family="Liberation Sans,sans-serif" font-size="9.4" fill="#4a4a4a">5</text><path d="M7 407.5h6" stroke="#4a4a4a" stroke-width="1"/><text transform="translate(13.3 395.1) rotate(-90)" text-anchor="middle" font-family="Liberation Sans,sans-serif" font-size="9.4" fill="#4a4a4a">6</text><path d="M7 432.5h6" stroke="#4a4a4a" stroke-width="1"/><text transform="translate(13.3 420.0) rotate(-90)" text-anchor="middle" font-family="Liberation Sans,sans-serif" font-size="9.4" fill="#4a4a4a">7</text><path d="M7 457.5h6" stroke="#4a4a4a" stroke-width="1"/><text transform="translate(13.3 444.9) rotate(-90)" text-anchor="middle" font-family="Liberation Sans,sans-serif" font-size="9.4" fill="#4a4a4a">8</text><path d="M7 482.5h6" stroke="#4a4a4a" stroke-width="1"/><text transform="translate(13.3 469.8) rotate(-90)" text-anchor="middle" font-family="Liberation Sans,sans-serif" font-size="9.4" fill="#4a4a4a">9</text><path d="M7 507.5h6" stroke="#4a4a4a" stroke-width="1"/><text transform="translate(13.3 494.7) rotate(-90)" text-anchor="middle" font-family="Liberation Sans,sans-serif" font-size="9.4" fill="#4a4a4a">10</text><path d="M7 532.5h6" stroke="#4a4a4a" stroke-width="1"/><text transform="translate(13.3 519.6) rotate(-90)" text-anchor="middle" font-family="Liberation Sans,sans-serif" font-size="9.4" fill="#4a4a4a">11</text><path d="M7 556.5h6" stroke="#4a4a4a" stroke-width="1"/><text transform="translate(13.3 544.5) rotate(-90)" text-anchor="middle" font-family="Liberation Sans,sans-serif" font-size="9.4" fill="#4a4a4a">12</text><path d="M7 581.5h6" stroke="#4a4a4a" stroke-width="1"/><text transform="translate(13.3 569.4) rotate(-90)" text-anchor="middle" font-family="Liberation Sans,sans-serif" font-size="9.4" fill="#4a4a4a">13</text><path d="M7 606.5h6" stroke="#4a4a4a" stroke-width="1"/><text transform="translate(13.3 594.3) rotate(-90)" text-anchor="middle" font-family="Liberation Sans,sans-serif" font-size="9.4" fill="#4a4a4a">14</text><path d="M7 631.5h6" stroke="#4a4a4a" stroke-width="1"/><text transform="translate(13.3 619.2) rotate(-90)" text-anchor="middle" font-family="Liberation Sans,sans-serif" font-size="9.4" fill="#4a4a4a">15</text><path d="M7 656.5h6" stroke="#4a4a4a" stroke-width="1"/><text transform="translate(13.3 644.1) rotate(-90)" text-anchor="middle" font-family="Liberation Sans,sans-serif" font-size="9.4" fill="#4a4a4a">16</text><path d="M7 681.5h6" stroke="#4a4a4a" stroke-width="1"/><text transform="translate(13.3 669.0) rotate(-90)" text-anchor="middle" font-family="Liberation Sans,sans-serif" font-size="9.4" fill="#4a4a4a">17</text><path d="M7 706.5h6" stroke="#4a4a4a" stroke-width="1"/><text transform="translate(13.3 693.9) rotate(-90)" text-anchor="middle" font-family="Liberation Sans,sans-serif" font-size="9.4" fill="#4a4a4a">18</text><path d="M7 731.5h6" stroke="#4a4a4a" stroke-width="1"/><text transform="translate(13.3 718.8) rotate(-90)" text-anchor="middle" font-family="Liberation Sans,sans-serif" font-size="9.4" fill="#4a4a4a">19</text><path d="M7 756.5h6" stroke="#4a4a4a" stroke-width="1"/><text transform="translate(13.3 743.7) rotate(-90)" text-anchor="middle" font-family="Liberation Sans,sans-serif" font-size="9.4" fill="#4a4a4a">20</text><path d="M7 781.5h6" stroke="#4a4a4a" stroke-width="1"/><text transform="translate(13.3 768.6) rotate(-90)" text-anchor="middle" font-family="Liberation Sans,sans-serif" font-size="9.4" fill="#4a4a4a">21</text><path d="M7 805.5h6" stroke="#4a4a4a" stroke-width="1"/><text transform="translate(13.3 793.5) rotate(-90)" text-anchor="middle" font-family="Liberation Sans,sans-serif" font-size="9.4" fill="#4a4a4a">22</text><path d="M7 830.5h6" stroke="#4a4a4a" stroke-width="1"/><text transform="translate(13.3 818.4) rotate(-90)" text-anchor="middle" font-family="Liberation Sans,sans-serif" font-size="9.4" fill="#4a4a4a">23</text><path d="M7 855.5h6" stroke="#4a4a4a" stroke-width="1"/><text transform="translate(13.3 843.3) rotate(-90)" text-anchor="middle" font-family="Liberation Sans,sans-serif" font-size="9.4" fill="#4a4a4a">24</text><path d="M7 880.5h6" stroke="#4a4a4a" stroke-width="1"/><text transform="translate(13.3 868.2) rotate(-90)" text-anchor="middle" font-family="Liberation Sans,sans-serif" font-size="9.4" fill="#4a4a4a">25</text><path d="M7 905.5h6" stroke="#4a4a4a" stroke-width="1"/><text transform="translate(13.3 893.1) rotate(-90)" text-anchor="middle" font-family="Liberation Sans,sans-serif" font-size="9.4" fill="#4a4a4a">26</text><path d="M7 930.5h6" stroke="#4a4a4a" stroke-width="1"/><text transform="translate(13.3 918.0) rotate(-90)" text-anchor="middle" font-family="Liberation Sans,sans-serif" font-size="9.4" fill="#4a4a4a">27</text><path d="M7 955.5h6" stroke="#4a4a4a" stroke-width="1"/><text transform="translate(13.3 942.9) rotate(-90)" text-anchor="middle" font-family="Liberation Sans,sans-serif" font-size="9.4" fill="#4a4a4a">28</text><path d="M7 980.5h6" stroke="#4a4a4a" stroke-width="1"/><text transform="translate(13.3 967.8) rotate(-90)" text-anchor="middle" font-family="Liberation Sans,sans-serif" font-size="9.4" fill="#4a4a4a">29</text><text transform="translate(13.3 992.7) rotate(-90)" text-anchor="middle" font-family="Liberation Sans,sans-serif" font-size="9.4" fill="#4a4a4a">30</text></svg>
<div class="a" style="left:637px;top:153px;width:950px;height:16px;background:#fff;"></div>
<div class="a" style="left:637px;top:153px;width:115px;height:16px;background:#c6c6c6;"></div>
<div class="a" style="left:1472px;top:153px;width:115px;height:16px;background:#c6c6c6;"></div>
<svg class="a" style="left:0px;top:0px;" width="1825" height="175" viewBox="0 0 1825 175"><path d="M643.5 159v6" stroke="#4a4a4a" stroke-width="1"/><path d="M660.5 159v6" stroke="#4a4a4a" stroke-width="1"/><text x="651.8" y="165.2" text-anchor="middle" font-family="Liberation Sans,sans-serif" font-size="9.6" fill="#4a4a4a">6</text><path d="M676.5 159v6" stroke="#4a4a4a" stroke-width="1"/><path d="M693.5 159v6" stroke="#4a4a4a" stroke-width="1"/><text x="685.3" y="165.2" text-anchor="middle" font-family="Liberation Sans,sans-serif" font-size="9.6" fill="#4a4a4a">4</text><path d="M710.5 159v6" stroke="#4a4a4a" stroke-width="1"/><path d="M727.5 159v6" stroke="#4a4a4a" stroke-width="1"/><text x="718.8" y="165.2" text-anchor="middle" font-family="Liberation Sans,sans-serif" font-size="9.6" fill="#4a4a4a">2</text><path d="M743.5 159v6" stroke="#4a4a4a" stroke-width="1"/><path d="M760.5 159v6" stroke="#4a4a4a" stroke-width="1"/><path d="M777.5 159v6" stroke="#4a4a4a" stroke-width="1"/><path d="M794.5 159v6" stroke="#4a4a4a" stroke-width="1"/><text x="785.8" y="165.2" text-anchor="middle" font-family="Liberation Sans,sans-serif" font-size="9.6" fill="#4a4a4a">2</text><path d="M810.5 159v6" stroke="#4a4a4a" stroke-width="1"/><path d="M827.5 159v6" stroke="#4a4a4a" stroke-width="1"/><text x="819.3" y="165.2" text-anchor="middle" font-family="Liberation Sans,sans-serif" font-size="9.6" fill="#4a4a4a">4</text><path d="M844.5 159v6" stroke="#4a4a4a" stroke-width="1"/><path d="M861.5 159v6" stroke="#4a4a4a" stroke-width="1"/><text x="852.8" y="165.2" text-anchor="middle" font-family="Liberation Sans,sans-serif" font-size="9.6" fill="#4a4a4a">6</text><path d="M877.5 159v6" stroke="#4a4a4a" stroke-width="1"/><path d="M894.5 159v6" stroke="#4a4a4a" stroke-width="1"/><text x="886.3" y="165.2" text-anchor="middle" font-family="Liberation Sans,sans-serif" font-size="9.6" fill="#4a4a4a">8</text><path d="M911.5 159v6" stroke="#4a4a4a" stroke-width="1"/><path d="M928.5 159v6" stroke="#4a4a4a" stroke-width="1"/><text x="919.8" y="165.2" text-anchor="middle" font-family="Liberation Sans,sans-serif" font-size="9.6" fill="#4a4a4a">10</text><path d="M944.5 159v6" stroke="#4a4a4a" stroke-width="1"/><path d="M961.5 159v6" stroke="#4a4a4a" stroke-width="1"/><text x="953.3" y="165.2" text-anchor="middle" font-family="Liberation Sans,sans-serif" font-size="9.6" fill="#4a4a4a">12</text><path d="M978.5 159v6" stroke="#4a4a4a" stroke-width="1"/><path d="M995.5 159v6" stroke="#4a4a4a" stroke-width="1"/><text x="986.8" y="165.2" text-anchor="middle" font-family="Liberation Sans,sans-serif" font-size="9.6" fill="#4a4a4a">14</text><path d="M1011.5 159v6" stroke="#4a4a4a" stroke-width="1"/><path d="M1028.5 159v6" stroke="#4a4a4a" stroke-width="1"/><text x="1020.3" y="165.2" text-anchor="middle" font-family="Liberation Sans,sans-serif" font-size="9.6" fill="#4a4a4a">16</text><path d="M1045.5 159v6" stroke="#4a4a4a" stroke-width="1"/><path d="M1062.5 159v6" stroke="#4a4a4a" stroke-width="1"/><text x="1053.8" y="165.2" text-anchor="middle" font-family="Liberation Sans,sans-serif" font-size="9.6" fill="#4a4a4a">18</text><path d="M1078.5 159v6" stroke="#4a4a4a" stroke-width="1"/><path d="M1095.5 159v6" stroke="#4a4a4a" stroke-width="1"/><text x="1087.3" y="165.2" text-anchor="middle" font-family="Liberation Sans,sans-serif" font-size="9.6" fill="#4a4a4a">20</text><path d="M1112.5 159v6" stroke="#4a4a4a" stroke-width="1"/><path d="M1129.5 159v6" stroke="#4a4a4a" stroke-width="1"/><text x="1120.8" y="165.2" text-anchor="middle" font-family="Liberation Sans,sans-serif" font-size="9.6" fill="#4a4a4a">22</text><path d="M1145.5 159v6" stroke="#4a4a4a" stroke-width="1"/><path d="M1162.5 159v6" stroke="#4a4a4a" stroke-width="1"/><text x="1154.3" y="165.2" text-anchor="middle" font-family="Liberation Sans,sans-serif" font-size="9.6" fill="#4a4a4a">24</text><path d="M1179.5 159v6" stroke="#4a4a4a" stroke-width="1"/><path d="M1196.5 159v6" stroke="#4a4a4a" stroke-width="1"/><text x="1187.9" y="165.2" text-anchor="middle" font-family="Liberation Sans,sans-serif" font-size="9.6" fill="#4a4a4a">26</text><path d="M1212.5 159v6" stroke="#4a4a4a" stroke-width="1"/><path d="M1229.5 159v6" stroke="#4a4a4a" stroke-width="1"/><text x="1221.4" y="165.2" text-anchor="middle" font-family="Liberation Sans,sans-serif" font-size="9.6" fill="#4a4a4a">28</text><path d="M1246.5 159v6" stroke="#4a4a4a" stroke-width="1"/><path d="M1263.5 159v6" stroke="#4a4a4a" stroke-width="1"/><text x="1254.9" y="165.2" text-anchor="middle" font-family="Liberation Sans,sans-serif" font-size="9.6" fill="#4a4a4a">30</text><path d="M1279.5 159v6" stroke="#4a4a4a" stroke-width="1"/><path d="M1296.5 159v6" stroke="#4a4a4a" stroke-width="1"/><text x="1288.4" y="165.2" text-anchor="middle" font-family="Liberation Sans,sans-serif" font-size="9.6" fill="#4a4a4a">32</text><path d="M1313.5 159v6" stroke="#4a4a4a" stroke-width="1"/><path d="M1330.5 159v6" stroke="#4a4a4a" stroke-width="1"/><text x="1321.9" y="165.2" text-anchor="middle" font-family="Liberation Sans,sans-serif" font-size="9.6" fill="#4a4a4a">34</text><path d="M1346.5 159v6" stroke="#4a4a4a" stroke-width="1"/><path d="M1363.5 159v6" stroke="#4a4a4a" stroke-width="1"/><text x="1355.4" y="165.2" text-anchor="middle" font-family="Liberation Sans,sans-serif" font-size="9.6" fill="#4a4a4a">36</text><path d="M1380.5 159v6" stroke="#4a4a4a" stroke-width="1"/><path d="M1397.5 159v6" stroke="#4a4a4a" stroke-width="1"/><text x="1388.9" y="165.2" text-anchor="middle" font-family="Liberation Sans,sans-serif" font-size="9.6" fill="#4a4a4a">38</text><path d="M1414.5 159v6" stroke="#4a4a4a" stroke-width="1"/><path d="M1430.5 159v6" stroke="#4a4a4a" stroke-width="1"/><text x="1422.4" y="165.2" text-anchor="middle" font-family="Liberation Sans,sans-serif" font-size="9.6" fill="#4a4a4a">40</text><path d="M1447.5 159v6" stroke="#4a4a4a" stroke-width="1"/><path d="M1464.5 159v6" stroke="#4a4a4a" stroke-width="1"/><text x="1455.9" y="165.2" text-anchor="middle" font-family="Liberation Sans,sans-serif" font-size="9.6" fill="#4a4a4a">42</text><path d="M1481.5 159v6" stroke="#4a4a4a" stroke-width="1"/><path d="M1497.5 159v6" stroke="#4a4a4a" stroke-width="1"/><text x="1489.4" y="165.2" text-anchor="middle" font-family="Liberation Sans,sans-serif" font-size="9.6" fill="#4a4a4a">44</text><path d="M1514.5 159v6" stroke="#4a4a4a" stroke-width="1"/><path d="M1531.5 159v6" stroke="#4a4a4a" stroke-width="1"/><text x="1522.9" y="165.2" text-anchor="middle" font-family="Liberation Sans,sans-serif" font-size="9.6" fill="#4a4a4a">46</text><path d="M1548.5 159v6" stroke="#4a4a4a" stroke-width="1"/><path d="M1564.5 159v6" stroke="#4a4a4a" stroke-width="1"/><text x="1556.4" y="165.2" text-anchor="middle" font-family="Liberation Sans,sans-serif" font-size="9.6" fill="#4a4a4a">48</text><path d="M1581.5 159v6" stroke="#4a4a4a" stroke-width="1"/></svg>
<svg class="a" style="left:745px;top:148px;" width="15" height="14" viewBox="0 0 15 14"><path d="M2.6 2.6h10v5l-5 5-5-5z" fill="#fff" stroke="#808080" stroke-width="1"/></svg>
<svg class="a" style="left:791px;top:160px;" width="15" height="19" viewBox="0 0 15 19"><path d="M7.5 2.4l5 5v10h-10v-10z" fill="#fff" stroke="#808080" stroke-width="1"/><path d="M2.5 11.5h10" stroke="#808080" stroke-width="1"/></svg>
<svg class="a" style="left:1465px;top:160px;" width="15" height="13" viewBox="0 0 15 13"><path d="M7.6 2.4l5 5v3.6h-10v-3.6z" fill="#fff" stroke="#808080" stroke-width="1"/></svg>
<div class="a" style="left:638px;top:178px;width:950px;height:815px;background:#fff;border-left:1px solid #c4c4c4;border-right:1px solid #c4c4c4;"></div>
<svg class="a" style="left:724px;top:217px;" width="30" height="30" viewBox="0 0 30 30"><path d="M1 28.5h27.5V1" fill="none" stroke="#b4b4b4" stroke-width="1"/></svg>
<svg class="a" style="left:1473px;top:217px;" width="30" height="30" viewBox="0 0 30 30"><path d="M1.5 1v27.5H29" fill="none" stroke="#b4b4b4" stroke-width="1"/></svg>
<div class="a" style="left:743px;top:268px;width:5px;height:5px;background:#000;"></div>
<svg class="a" style="left:940.2px;top:249.8px" width="35.2" height="45.8"><text class="s" x="0" y="35.2" font-size="35.2" fill="#000">三</text></svg>
<svg class="a" style="left:978.4px;top:249.8px" width="35.2" height="45.8"><text class="s" x="0" y="35.2" font-size="35.2" fill="#000">、</text></svg>
<svg class="a" style="left:1041.6px;top:249.8px" width="246.4" height="45.8"><text class="s" x="0" y="35.2" font-size="35.2" fill="#000">投标保证金凭证</text></svg>
<svg class="a" style="left:0;top:0" width="1825" height="993"><path d="M1305.6 263.1V272.6H1287.3M1295.0 265.6L1287.3 272.6l7.7 7.0" fill="none" stroke="#858585" stroke-width="2.01"/></svg>
<div class="a" style="left:743px;top:318px;width:5px;height:5px;background:#000;"></div>
<svg class="a" style="left:751.2px;top:304px" width="28.8" height="37.4"><text class="s" x="0" y="28.8" font-size="28.8" fill="#000">（</text></svg>
<svg class="a" style="left:782px;top:304px" width="28.8" height="37.4"><text class="s" x="0" y="28.8" font-size="28.8" fill="#000">一</text></svg>
<svg class="a" style="left:814.1px;top:304px" width="28.8" height="37.4"><text class="s" x="0" y="28.8" font-size="28.8" fill="#000">）</text></svg>
<svg class="a" style="left:854.2px;top:304px" width="144.0" height="37.4"><text class="s" x="0" y="28.8" font-size="28.8" fill="#000">投标保证金</text></svg>
<svg class="a" style="left:0;top:0" width="1825" height="993"><path d="M1013.6 314.9V322.7H998.6M1004.9 316.9L998.6 322.7l6.3 5.8" fill="none" stroke="#858585" stroke-width="1.64"/></svg>
<svg class="a" style="left:750px;top:344px;" width="690" height="396" viewBox="0 0 690 396"><rect x="2.9" y="2.6" width="683.6" height="390.6" fill="#fff" stroke="#000" stroke-width="1.25"/></svg>
<svg class="a" style="left:0;top:0" width="1825" height="993"><path d="M1445.4 353.4H1447.9V358.5H1438.2M1442.3 354.7L1438.2 358.5l4.1 3.7" fill="none" stroke="#858585" stroke-width="1.06"/></svg>
<svg class="a" style="left:0;top:0" width="1825" height="993"><path d="M771.9 358.3V363.5H761.8M766.1 359.6L761.8 363.5l4.3 3.9" fill="none" stroke="#858585" stroke-width="1.11"/></svg>
<svg class="a" style="left:0;top:0" width="1825" height="993"><path d="M771.9 387.3V392.5H761.8M766.1 388.6L761.8 392.5l4.3 3.9" fill="none" stroke="#858585" stroke-width="1.11"/></svg>
<svg class="a" style="left:0;top:0" width="1825" height="993"><path d="M771.9 416.3V421.5H761.8M766.1 417.6L761.8 421.5l4.3 3.9" fill="none" stroke="#858585" stroke-width="1.11"/></svg>
<svg class="a" style="left:0;top:0" width="1825" height="993"><path d="M771.9 473.3V478.5H761.8M766.1 474.6L761.8 478.5l4.3 3.9" fill="none" stroke="#858585" stroke-width="1.11"/></svg>
<svg class="a" style="left:0;top:0" width="1825" height="993"><path d="M771.9 502.3V507.5H761.8M766.1 503.6L761.8 507.5l4.3 3.9" fill="none" stroke="#858585" stroke-width="1.11"/></svg>
<svg class="a" style="left:0;top:0" width="1825" height="993"><path d="M771.9 531.3V536.5H761.8M766.1 532.6L761.8 536.5l4.3 3.9" fill="none" stroke="#858585" stroke-width="1.11"/></svg>
<svg class="a" style="left:0;top:0" width="1825" height="993"><path d="M771.9 559.3V564.5H761.8M766.1 560.6L761.8 564.5l4.3 3.9" fill="none" stroke="#858585" stroke-width="1.11"/></svg>
<svg class="a" style="left:0;top:0" width="1825" height="993"><path d="M771.9 588.3V593.5H761.8M766.1 589.6L761.8 593.5l4.3 3.9" fill="none" stroke="#858585" stroke-width="1.11"/></svg>
<svg class="a" style="left:0;top:0" width="1825" height="993"><path d="M771.9 617.3V622.5H761.8M766.1 618.6L761.8 622.5l4.3 3.9" fill="none" stroke="#858585" stroke-width="1.11"/></svg>
<svg class="a" style="left:0;top:0" width="1825" height="993"><path d="M769.3 646.3H771.9V651.5H761.8M766.1 647.6L761.8 651.5l4.3 3.9" fill="none" stroke="#858585" stroke-width="1.11"/></svg>
<svg class="a" style="left:944.6px;top:438.2px" width="302.4" height="21.8"><text class="s" x="0" y="16.8" font-size="16.8" font-weight="bold" fill="#000">投标保证金转账凭证或收据复印件粘贴处</text></svg>
<svg class="a" style="left:0;top:0" width="1825" height="993"><path d="M1256.8 444.1V449.1H1247.2M1251.3 445.4L1247.2 449.1l4.1 3.7" fill="none" stroke="#858585" stroke-width="1.05"/></svg>
<svg class="a" style="left:0;top:0" width="1825" height="993"><path d="M996.1 756.4V763.4H982.6M988.3 758.2L982.6 763.4l5.7 5.2" fill="none" stroke="#858585" stroke-width="1.48"/></svg>
</body></html>
